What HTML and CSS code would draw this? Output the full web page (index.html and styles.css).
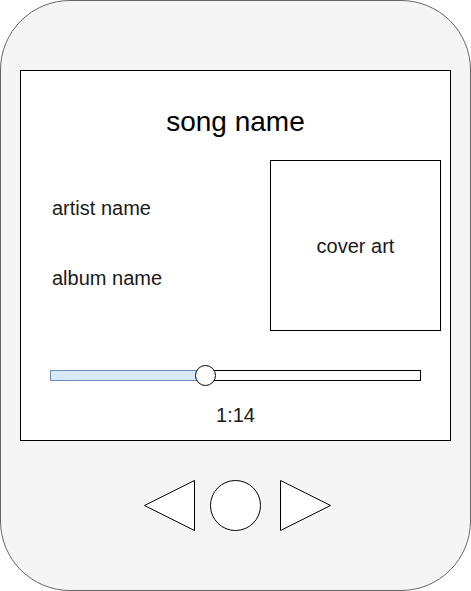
FILE: index.html
```html
<!DOCTYPE html>
<html>
<head>
<meta charset="utf-8">
<link rel="stylesheet" href="styles.css">
</head>
<body>
<div class="phone">
  <div class="screen">
    <div class="title">song name</div>
    <div class="row">
      <div class="info">
        <div class="artist">artist name</div>
        <div class="album">album name</div>
      </div>
      <div class="cover">cover art</div>
    </div>
    <div class="slider">
      <div class="fill" style="width: 151px"></div>
      <div class="knob"></div>
    </div>
    <div class="time">1:14</div>
  </div>
  <svg class="controls" width="200" height="62" viewBox="0 0 200 62">
    <polygon points="9.5,30.5 59.5,5.5 59.5,55.5" fill="#fff" stroke="#000" stroke-width="1"/>
    <circle cx="100.5" cy="30.5" r="25" fill="#fff" stroke="#000" stroke-width="1"/>
    <polygon points="145.5,5.5 145.5,55.5 195.5,30.5" fill="#fff" stroke="#000" stroke-width="1"/>
  </svg>
</div>
</body>
</html>
```

FILE: styles.css
```css
html, body {
  margin: 0;
  padding: 0;
  background: #ffffff;
}

body {
  font-family: "Liberation Sans", Arial, sans-serif;
  color: #000;
}

.phone {
  box-sizing: border-box;
  width: 471px;
  height: 591px;
  border: 1px solid #666666;
  border-radius: 70px;
  background: #f5f5f5;
  padding: 69px 0 0 19px;
  display: flex;
  flex-direction: column;
}

.screen {
  box-sizing: border-box;
  width: 431px;
  height: 371px;
  border: 1px solid #000;
  background: #fff;
  display: flex;
  flex-direction: column;
}

.title {
  margin-top: 35px;
  font-size: 28px;
  line-height: 32px;
  text-align: center;
  color: #000;
}

.row {
  display: flex;
  justify-content: space-between;
  margin-top: 22px;
}

.info {
  padding-left: 31px;
  font-size: 20px;
  line-height: 23px;
  color: #1a1a1a;
}

.artist {
  margin-top: 37px;
}

.album {
  margin-top: 47px;
}

.cover {
  box-sizing: border-box;
  width: 171px;
  height: 171px;
  margin-right: 9px;
  border: 1px solid #000;
  display: flex;
  align-items: center;
  justify-content: center;
  font-size: 20px;
  color: #1a1a1a;
  padding-top: 2px;
}

.slider {
  position: relative;
  box-sizing: border-box;
  width: 371px;
  height: 11px;
  margin-top: 39px;
  margin-left: 29px;
  border: 1px solid #000;
  background: #fff;
}

.fill {
  position: absolute;
  left: -1px;
  top: -1px;
  box-sizing: border-box;
  height: 11px;
  background: #dae8fc;
  border: 1px solid #6c8ebf;
}

.knob {
  position: absolute;
  left: 144px;
  top: -6px;
  box-sizing: border-box;
  width: 21px;
  height: 21px;
  border: 1px solid #000;
  border-radius: 50%;
  background: #fff;
}

.time {
  margin-top: 23px;
  font-size: 20px;
  line-height: 23px;
  text-align: center;
  color: #1a1a1a;
}

.controls {
  display: block;
  margin-top: 34px;
  margin-left: 115px;
}
```
